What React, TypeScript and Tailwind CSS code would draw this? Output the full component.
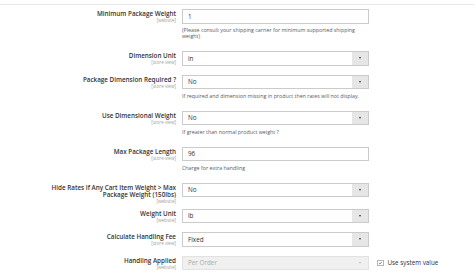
import React from 'react';

type Row = {
    label: React.ReactNode;
    scope: string;
    kind: 'input' | 'select' | 'disabled';
    value: string;
    note?: React.ReactNode;
    system?: boolean;
};

const rows: Row[] = [
    {
        label: 'Minimum Package Weight',
        scope: '[website]',
        kind: 'input',
        value: '1',
        note: '(Please consult your shipping carrier for minimum supported shipping weight)',
    },
    { label: 'Dimension Unit', scope: '[store view]', kind: 'select', value: 'in' },
    {
        label: 'Package Dimension Required ?',
        scope: '[store view]',
        kind: 'select',
        value: 'No',
        note: 'If required and dimension missing in product then rates will not display.',
    },
    {
        label: 'Use Dimensional Weight',
        scope: '[store view]',
        kind: 'select',
        value: 'No',
        note: 'If greater than normal product weight ?',
    },
    {
        label: 'Max Package Length',
        scope: '[store view]',
        kind: 'input',
        value: '96',
        note: 'Charge for extra handling',
    },
    {
        label: (
            <>
                Hide Rates If Any Cart Item Weight &gt; Max
                <br />
                Package Weight (150lbs)
            </>
        ),
        scope: '[website]',
        kind: 'select',
        value: 'No',
    },
    { label: 'Weight Unit', scope: '[website]', kind: 'select', value: 'lb' },
    { label: 'Calculate Handling Fee', scope: '[store view]', kind: 'select', value: 'Fixed' },
    { label: 'Handling Applied', scope: '[website]', kind: 'disabled', value: 'Per Order', system: true },
];

const Control = ({ row }: { row: Row }) => {
    if (row.kind === 'input') {
        return (
            <div className="h-[14.5px] border border-[#cbcbcb] bg-white flex items-center pl-[5px] text-[6.3px] text-[#303030]">
                {row.value}
            </div>
        );
    }
    const disabled = row.kind === 'disabled';
    return (
        <div
            className={`h-[14.5px] border flex items-stretch text-[6.3px] ${
                disabled ? 'border-[#e2e2e2] bg-[#f0f0f0] text-[#a9a9a9]' : 'border-[#cbcbcb] bg-white text-[#303030]'
            }`}
        >
            <div className="flex-1 flex items-center pl-[5px]">{row.value}</div>
            <div className={`w-[16px] flex items-center justify-center ${disabled ? '' : 'bg-[#e6e6e6]'}`}>
                <div
                    className={`w-0 h-0 border-l-[1.5px] border-r-[1.5px] border-t-[2px] border-l-transparent border-r-transparent ${
                        disabled ? 'border-t-[#bdbdbd]' : 'border-t-[#333]'
                    }`}
                />
            </div>
        </div>
    );
};

export default function App() {
    return (
        <div className="w-[474px] h-[278px] bg-white overflow-hidden pt-[4px]" style={{ fontFamily: '"Open Sans", "Liberation Sans", sans-serif' }}>
            <div className="border-t border-[#e8e8e8]" />
            <div className="pt-[4px]">
                {rows.map((row, i) => (
                    <div key={i} className="flex items-start">
                        {/* label column */}
                        <div className="w-[176px] shrink-0 text-right pt-[1px] pb-[5px]">
                            <div className="text-[6.3px] leading-[7px] font-semibold text-[#333]">{row.label}</div>
                            <div className="text-[4.6px] leading-[5px] text-[#a0a0a0] mt-[1px]">{row.scope}</div>
                        </div>
                        {/* control column */}
                        <div className={`w-[187px] shrink-0 ml-[6px] ${row.note ? 'pb-[12px]' : 'pb-[9px]'}`}>
                            <Control row={row} />
                            {row.note && (
                                <div className="mt-[3.5px] text-[5.3px] leading-[6px] text-[#5a5a5a]">{row.note}</div>
                            )}
                        </div>
                        {row.system && (
                            <div className="ml-[8px] h-[14.5px] flex items-center gap-[4px]">
                                <div className="w-[6.5px] h-[6.5px] border border-[#b5b5b5] bg-white flex items-center justify-center">
                                    <svg viewBox="0 0 10 10" className="w-[6px] h-[6px]">
                                        <path d="M2 5.2 L4.2 7.3 L8.3 2.6" fill="none" stroke="#333" strokeWidth="1.4" />
                                    </svg>
                                </div>
                                <span className="text-[6.3px] text-[#303030]">Use system value</span>
                            </div>
                        )}
                    </div>
                ))}
            </div>
        </div>
    );
}
